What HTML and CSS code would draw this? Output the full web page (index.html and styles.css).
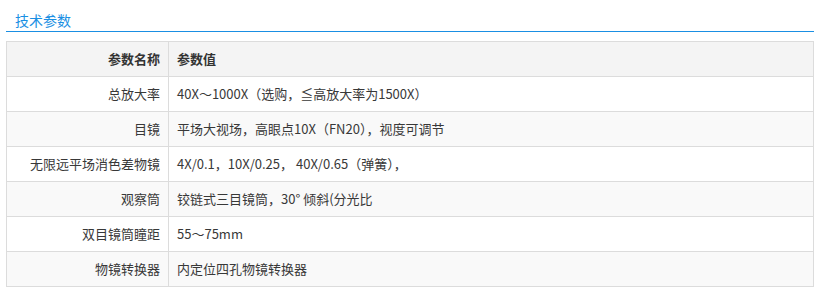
FILE: index.html
```html
<!DOCTYPE html>
<html lang="zh">
<head>
<meta charset="utf-8">
<link rel="stylesheet" href="styles.css">
</head>
<body>
<div class="spec">
  <div class="spec-title"><span>技术参数</span></div>
  <table class="spec-table">
    <colgroup><col class="col-name"><col class="col-value"></colgroup>
    <thead>
      <tr><th class="name">参数名称</th><th class="value">参数值</th></tr>
    </thead>
    <tbody>
      <tr><td class="name">总放大率</td><td class="value">40X～1000X（选购，≦高放大率为1500X）</td></tr>
      <tr><td class="name">目镜</td><td class="value">平场大视场，高眼点10X（FN20），视度可调节</td></tr>
      <tr><td class="name">无限远平场消色差物镜</td><td class="value">4X/0.1，10X/0.25， 40X/0.65（弹簧），</td></tr>
      <tr><td class="name">观察筒</td><td class="value">铰链式三目镜筒，30° 倾斜(分光比</td></tr>
      <tr><td class="name">双目镜筒瞳距</td><td class="value">55～75mm</td></tr>
      <tr><td class="name">物镜转换器</td><td class="value">内定位四孔物镜转换器</td></tr>
    </tbody>
  </table>
</div>
</body>
</html>
```

FILE: styles.css
```css
html, body {
  margin: 0;
  padding: 0;
  background: #fff;
}
body {
  font-family: "Noto Sans CJK SC", "Noto Sans", sans-serif;
  color: #383838;
}
.spec {
  width: 808px;
  margin-left: 6px;
}
.spec-title {
  padding: 9px 0 0 9px;
  line-height: 22px;
  height: 22px;
  font-size: 14px;
  color: #1a8fe3;
  border-bottom: 1px solid #1a8fe3;
}
.spec-table {
  margin-top: 9px;
  width: 808px;
  border-collapse: collapse;
  border: 1px solid #dcdcdc;
  font-size: 13px;
  table-layout: fixed;
}
.col-name { width: 162px; }
.spec-table th,
.spec-table td {
  height: 34px;
  line-height: 34px;
  padding: 0 8px;
  border: 1px solid #dcdcdc;
  white-space: nowrap;
  box-sizing: border-box;
}
.spec-table th {
  background: #f4f4f4;
  font-weight: bold;
  color: #333;
}
.spec-table .name { text-align: right; }
.spec-table .value { text-align: left; }
.spec-table tbody tr:nth-child(even) td { background: #f9f9f9; }
```
